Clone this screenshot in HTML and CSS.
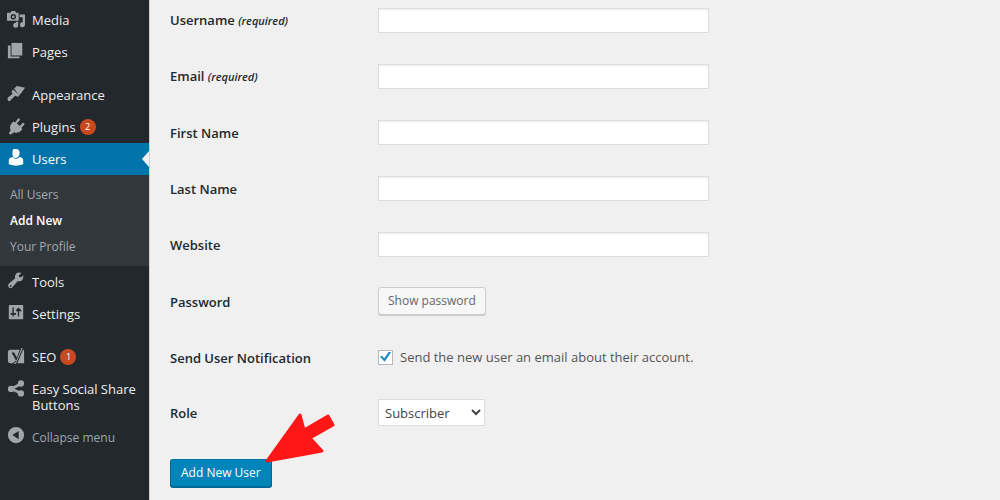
FILE: index.html
```html
<!DOCTYPE html>
<html lang="en">
<head>
<meta charset="utf-8">
<meta name="viewport" content="width=device-width, initial-scale=1">
<title>Add New User</title>
<link rel="stylesheet" href="styles.css">
</head>
<body>
<div class="admin">
  <nav class="sidebar" aria-label="Main menu">
    <ul class="menu">
      <li><a class="item" href="#"><svg class="icon" viewBox="0 0 20 20"><path fill-rule="evenodd" d="M2 3h2l1-2h4l1 2h2q1 0 1 1v7q0 1-1 1H1q-1 0-1-1V4q0-1 1-1zm5 1.500a3 3 0 1 0 0 6 3 3 0 0 0 0-6zm0 1.500a1.500 1.500 0 1 1 0 3 1.500 1.500 0 0 1 0-3z"/><path d="M14 5h6v11.500a2.800 2.800 0 1 1-2.500-2.800V8H14zM10 13h2.500v4a2.800 2.800 0 1 1-2.500-2.800z"/></svg>Media</a></li>
      <li><a class="item" href="#"><svg class="icon" viewBox="0 0 20 20"><path d="M5 1h12v14H5z"/><path d="M1 4h3v12h10v2H1z"/></svg>Pages</a></li>
      <li class="spaced"><a class="item" href="#"><svg class="icon" viewBox="0 0 20 20"><path d="M8 4l3-3 4 1 5 1-5 7-2 1zM7 5l7 7-2 1-3-1-5 5q-2 2-3 0t0-3l5-4-1-3z"/></svg>Appearance</a></li>
      <li><a class="item" href="#"><svg class="icon" viewBox="0 0 20 20"><path d="M7 5l2 1 3-4q1-1 2 0t0 2l-3 3 3 3 3-3q1-1 2 0t0 2l-3 3 1 2q-4 5-9 3l-3 2q-2 1-3-1l2-3Q2 9 7 5z"/></svg>Plugins <span class="badge">2</span></a></li>
      <li>
        <a class="item current" href="#"><svg class="icon" viewBox="0 0 20 20"><path d="M10 0q4 0 4 4.500T10 10 6 4.500 10 0zM6 9q4 4 8 0 4 1 4 4v4q-8 3-16 0v-4q0-3 4-4z"/></svg>Users</a>
        <ul class="submenu">
          <li><a href="#">All Users</a></li>
          <li><a class="active" href="#">Add New</a></li>
          <li><a href="#">Your Profile</a></li>
        </ul>
      </li>
      <li><a class="item" href="#"><svg class="icon" viewBox="0 0 20 20"><path fill-rule="evenodd" d="M17 5l-3 1-1-2 3-3q-4-1-6 1-2 3-1 5l-7 6q-2 2 0 4t4 0l6-7q3 1 5-1 2-3 1-6zM4 14.500a1 1 0 1 1 0 2 1 1 0 0 1 0-2z"/></svg>Tools</a></li>
      <li><a class="item" href="#"><svg class="icon" viewBox="0 0 20 20"><path fill-rule="evenodd" d="M3 1h14q1 0 1 1v14q0 1-1 1H3q-1 0-1-1V2q0-1 1-1zm3 3v6H4v2h2v2h1.500v-2H10v-2H7.500V4zm6.500 0L10 7v1h2v6h1.500V8H16V7z"/></svg>Settings</a></li>
      <li class="spaced"><a class="item" href="#"><svg class="icon" viewBox="0 0 20 20"><path d="M4 3h14q1 0 1 2v13H4q-3 0-3-3V6q0-3 3-3z"/><path class="cut" d="M15 0h4l-7 17q-1 3-5 3v-3q2 0 3-2L5 6h3l3 6z"/><path d="M16 1h1.500L11 16q-1 3-3 3v-1q2-1 3-4z"/></svg>SEO <span class="badge">1</span></a></li>
      <li><a class="item" href="#"><svg class="icon" viewBox="0 0 20 20"><path class="line" d="M16 5L5 11l11 5"/><circle cx="15.500" cy="5" r="3.500"/><circle cx="4.500" cy="11" r="3.500"/><circle cx="15.500" cy="16" r="3.500"/></svg>Easy Social Share Buttons</a></li>
      <li><button class="item collapse" type="button"><svg class="icon" viewBox="0 0 20 20"><path fill-rule="evenodd" d="M10 0a9 9 0 1 0 0 18 9 9 0 0 0 0-18zm3 4.500v9L6 9z"/></svg>Collapse menu</button></li>
    </ul>
  </nav>
  <main class="content">
    <form>
      <div class="fields">
        <div class="row"><label for="username">Username <em>(required)</em></label><input class="text" id="username" type="text"></div>
        <div class="row"><label for="email">Email <em>(required)</em></label><input class="text" id="email" type="email"></div>
        <div class="row"><label for="first">First Name</label><input class="text" id="first" type="text"></div>
        <div class="row"><label for="last">Last Name</label><input class="text" id="last" type="text"></div>
        <div class="row"><label for="website">Website</label><input class="text" id="website" type="url"></div>
      </div>
      <div class="fields options">
        <div class="row"><label for="password">Password</label><button class="button" id="password" type="button">Show password</button></div>
        <div class="row"><span class="label">Send User Notification</span><label class="check" for="notify"><input id="notify" type="checkbox" checked>Send the new user an email about their account.</label></div>
        <div class="row"><label for="role">Role</label><select id="role"><option>Subscriber</option></select></div>
      </div>
      <div class="submit">
        <button class="button primary" type="submit">Add New User</button>
        <svg class="pointer" viewBox="0 0 70 50" aria-hidden="true"><path d="M2 48L35 2l4 15 24-14 5 9-23 13 12 13z"/></svg>
      </div>
    </form>
  </main>
</div>
</body>
</html>
```
FILE: styles.css
```css
* { box-sizing: border-box; }
body {
  margin: 0;
  background: #f0f0f0;
  color: #444;
  font: 13px/16px "Open Sans", "Noto Sans", sans-serif;
}
.admin { display: flex; min-height: 100vh; }
.sidebar {
  flex: 0 0 150px;
  padding-top: 4px;
  background: #23282d;
  border-right: 1px solid #d0d1d2;
}
.menu, .submenu { margin: 0; padding: 0; list-style: none; }
.item {
  position: relative;
  display: flex;
  align-items: flex-start;
  width: 100%;
  padding: 8px 8px 8px 32px;
  border: 0;
  background: none;
  color: #eee;
  font: inherit;
  text-align: left;
  text-decoration: none;
}
.spaced { margin-top: 11px; }
.icon {
  position: absolute;
  left: 7px;
  top: 6px;
  width: 18px;
  height: 18px;
  fill: #a0a5aa;
}
.icon .line { fill: none; stroke: #a0a5aa; stroke-width: 3; }
.icon .cut { fill: #23282d; }
.badge {
  width: 16px;
  height: 16px;
  margin-left: 4px;
  border-radius: 8px;
  background: #ca4a1f;
  color: #fff;
  font-size: 9px;
  text-align: center;
}
.current { background: #0073aa; color: #fff; }
.current .icon { fill: #fff; }
.current::after {
  content: "";
  position: absolute;
  right: 0;
  top: 8px;
  border: solid transparent;
  border-width: 8px 7px 8px 0;
  border-right-color: #f0f0f0;
}
.submenu { padding: 7px 0 6px; background: #32373c; }
.submenu a {
  display: block;
  padding: 5px 10px;
  color: #a5a9ad;
  font-size: 12px;
  text-decoration: none;
}
.submenu .active { color: #fff; font-weight: 600; }
.collapse { padding-top: 9px; color: #a0a5aa; font-size: 12px; }
.content { flex: 1; min-width: 0; padding: 7px 20px 12px; }
.fields { display: grid; gap: 31px; }
.options { gap: 29px; padding-top: 30px; }
.row {
  display: grid;
  grid-template-columns: 208px 1fr;
  align-items: center;
  justify-items: start;
  min-height: 26px;
}
.row > label:first-child, .label {
  padding-top: 1px;
  color: #23282d;
  font-weight: 600;
}
em { font-size: 11px; }
.text {
  width: 100%;
  max-width: 331px;
  height: 25px;
  padding: 2px 6px;
  border: 1px solid #ddd;
  background: #fff;
  box-shadow: inset 0 1px 2px #00000012;
  font: inherit;
}
.fields:first-child { gap: 30px; }
.button {
  height: 28px;
  padding: 0 9px;
  border: 1px solid #ccc;
  border-radius: 3px;
  background: #f7f7f7;
  box-shadow: 0 1px 0 #ccc;
  color: #666;
  font: inherit;
  font-size: 12px;
}
.check { display: flex; align-items: center; gap: 7px; color: #555; }
.check input {
  appearance: none;
  display: grid;
  place-items: center;
  width: 15px;
  height: 15px;
  margin: 0;
  border: 1px solid #b4b9be;
  background: #fff;
}
.check input:checked::before {
  content: "";
  width: 11px;
  height: 11px;
  background: #1e8cbe;
  clip-path: polygon(0 48%, 18% 38%, 38% 62%, 82% 0, 100% 10%, 42% 94%);
}
select {
  width: 107px;
  height: 27px;
  padding: 0 2px;
  border: 1px solid #ddd;
  background: #fff;
  color: #444;
  font: inherit;
}
.submit { position: relative; padding-top: 33px; }
.primary {
  padding: 0 10px;
  border-color: #0073aa #006799 #006799;
  background: #0085ba;
  box-shadow: 0 1px 0 #006799;
  color: #fff;
}
.pointer {
  position: absolute;
  left: 95px;
  top: -13px;
  width: 70px;
  height: 50px;
  fill: #ff1717;
  stroke: #ff1717;
  stroke-width: 3;
  stroke-linejoin: round;
}
```
